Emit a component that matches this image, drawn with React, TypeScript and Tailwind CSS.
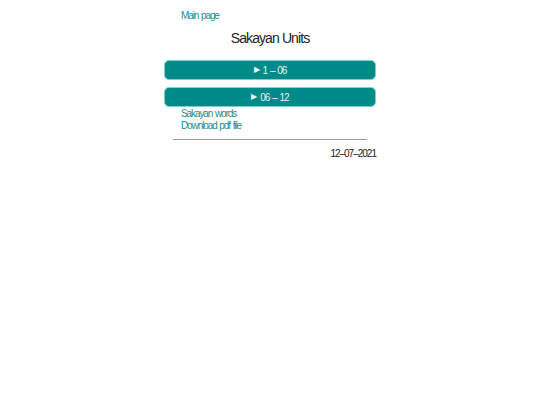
import React from 'react'

const font = { fontFamily: '"Liberation Sans", Arial, sans-serif' }

const Fold: React.FC<{ label: string }> = ({ label }) => (
  <div className="flex h-[20px] items-center justify-center rounded-[5px] border border-[#7fd0cc] bg-[#008b88] text-[10px] tracking-[-1px] [word-spacing:1px] text-[#e6f4f3]">
    <span className="mr-[4px] text-[8px]">▶</span>
    {label}
  </div>
)

export default function App() {
  return (
    <div className="min-h-[405px] w-[540px] bg-white" style={font}>
      <div className="mx-auto w-[212px] pt-[10px]">
        <a className="ml-[17px] block text-[10px] leading-[12px] tracking-[-1.1px] [word-spacing:1px] text-[#1a8d8a]">
          Main page
        </a>
        <h1 className="mt-[8px] text-center text-[14px] leading-[16px] tracking-[-0.9px] text-[#222]">Sakayan Units</h1>
        <div className="mt-[14px] flex flex-col gap-[7px]">
          <Fold label="1 – 06" />
          <Fold label="06 – 12" />
        </div>
        <div className="ml-[17px] mt-[1px] flex flex-col text-[10px] leading-[12px] tracking-[-1.1px] [word-spacing:1px] text-[#1a8d8a]">
          <a>Sakayan words</a>
          <a>Download pdf file</a>
        </div>
        <hr className="mx-[9px] mt-[7px] border-t border-[#9a9a9a]" />
        <p className="mt-[8px] text-right text-[10px] leading-[12px] tracking-[-1px] text-[#222]">12–07–2021</p>
      </div>
    </div>
  )
}
